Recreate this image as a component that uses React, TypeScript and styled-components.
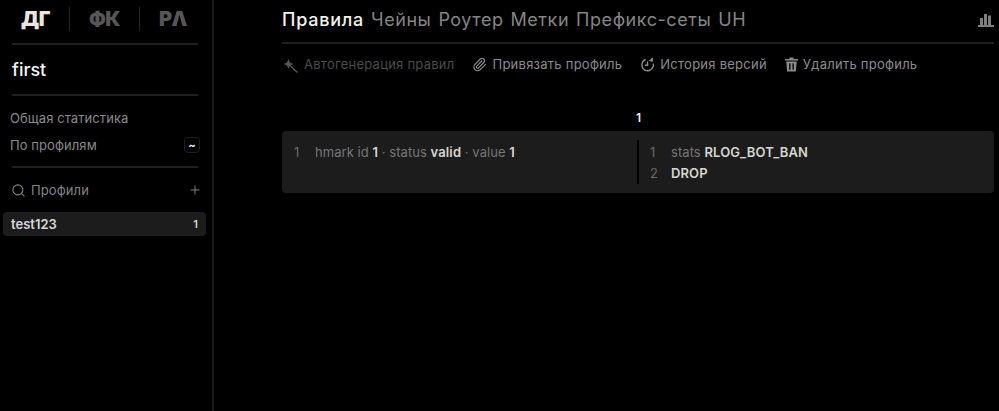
import React from "react";
import styled, { createGlobalStyle } from "styled-components";
import { Paperclip, Search, Plus } from "lucide-react";

const Global = createGlobalStyle`
    html, body {
        margin: 0;
        background: #000;
        font-family: Inter, "Noto Sans", sans-serif;
    }
`;

const Page = styled.div`
    display: flex;
    height: 411px;
    width: 999px;
    overflow: hidden;
    background: #000;
`;

const Sidebar = styled.aside`
    width: 214px;
    height: 100%;
    box-sizing: border-box;
    flex: none;
    border-right: 2px solid #1c1c1c;
    padding: 0 6px 0 0;
`;

const Brands = styled.div`
    display: grid;
    grid-template-columns: 70px 70px 66px;
    height: 31px;
    padding-top: 7px;
    margin: 0 0 5px;
`;

const Brand = styled.div<{ $active?: boolean; $divided?: boolean }>`
    display: flex;
    align-items: center;
    justify-content: ${p => (p.$active ? "flex-end" : "center")};
    height: 24px;
    font-size: 20px;
    font-weight: 900;
    letter-spacing: -0.5px;
    color: ${p => (p.$active ? "#e9e6df" : "#565656")};
    padding-right: ${p => (p.$active ? "19px" : "0")};
    border-right: ${p => (p.$active || p.$divided ? "1px solid #262626" : "none")};
    box-sizing: border-box;
`;

const Rule = styled.div`
    height: 2px;
    background: #202020;
    margin: 0 8px 0 12px;
`;

const ProfileTitle = styled.div`
    height: 49px;
    margin-left: 12px;
    display: flex;
    align-items: center;
    font-size: 18px;
    font-weight: 500;
    color: #f4f4f4;
`;

const StatLink = styled.div`
    display: flex;
    align-items: center;
    justify-content: space-between;
    height: 27px;
    margin: 0 6px 0 10px;
    font-size: 13px;
    letter-spacing: 0.08px;
    color: #8a8a8a;
`;

const StatList = styled.div`
    padding: 8px 0 8px;
`;

const Tilde = styled.span`
    width: 14px;
    height: 14px;
    border: 1px solid #1f1f1f;
    border-radius: 4px;
    display: flex;
    align-items: center;
    justify-content: center;
    font-size: 11px;
    font-weight: 700;
    color: #eee;
`;

const SearchRow = styled.div`
    display: flex;
    align-items: center;
    gap: 5px;
    height: 44px;
    margin: 0 4px 0 11px;
    font-size: 13px;
    letter-spacing: 0.1px;
    color: #858585;
`;

const Grow = styled.span`
    flex: 1;
`;

const ProfileItem = styled.div`
    display: flex;
    align-items: center;
    justify-content: space-between;
    height: 24px;
    margin-left: 3px;
    padding: 0 8px 0 8px;
    border-radius: 4px;
    background: #1c1c1c;
    font-size: 13px;
    font-weight: 600;
    color: #d8d8d8;
`;

const Count = styled.span`
    font-size: 11px;
    font-weight: 600;
`;

const Main = styled.main`
    flex: 1;
    min-width: 0;
    padding: 0 5px 0 68px;
`;

const Tabs = styled.nav`
    display: flex;
    align-items: center;
    gap: 7px;
    height: 39px;
    padding-bottom: 3px;
    font-size: 18px;
    letter-spacing: 0.55px;
`;

const Tab = styled.span<{ $active?: boolean }>`
    color: ${p => (p.$active ? "#f4f2ec" : "#858585")};
    font-weight: ${p => (p.$active ? 500 : 400)};
    letter-spacing: ${p => (p.$active ? "0.75px" : "inherit")};
`;

const ChartButton = styled.span`
    margin-left: auto;
    display: flex;
    margin-top: 3px;
`;

const Divider = styled.div`
    height: 2px;
    background: #202020;
`;

const Actions = styled.div`
    display: flex;
    align-items: center;
    height: 40px;
    gap: 18px;
`;

const Action = styled.span<{ $muted?: boolean }>`
    display: flex;
    align-items: center;
    gap: 5px;
    font-size: 13px;
    letter-spacing: 0.25px;
    color: ${p => (p.$muted ? "#4b4b4b" : "#8c8c8c")};
`;

const ColumnHead = styled.div`
    display: grid;
    grid-template-columns: 1fr 1fr;
    margin-top: 20px;
    height: 27px;
    align-items: center;
    font-size: 12px;
    font-weight: 600;
    color: #eee;
`;

const HeadCell = styled.span`
    grid-column: 2;
    margin-left: -2px;
`;

const RuleCard = styled.div`
    display: grid;
    grid-template-columns: 355px 1fr;
    height: 62px;
    box-sizing: border-box;
    padding: 9px 0;
    background: #1c1c1c;
    border-radius: 4px;
`;

const Side = styled.div<{ $bordered?: boolean }>`
    padding-left: ${p => (p.$bordered ? "11px" : "12px")};
    border-left: ${p => (p.$bordered ? "2px solid #000" : "none")};
`;

const Line = styled.div`
    display: flex;
    align-items: center;
    height: 21px;
    padding-top: 1px;
    margin-bottom: -1px;
    font-size: 13px;
    letter-spacing: 0.05px;
    color: #767676;
`;

const LineNo = styled.span`
    width: 21px;
    color: #6a6a6a;
    flex: none;
`;

const Strong = styled.b`
    color: #d8d6d0;
    font-weight: 600;
    letter-spacing: 0.12px;
`;

const Text = styled.span`
    white-space: pre;
`;

function WandIcon() {
    return (
        <svg width="17" height="17" viewBox="0 0 17 17" fill="#555">
            <path d="M6.500 3 8 6.500 11.500 8 8 9.500 6.500 13 5 9.500 1.500 8 5 6.500z" />
            <path d="M7.500 9l8 7.500" stroke="#555" strokeWidth="1.5" />
        </svg>
    );
}

function HistoryIcon() {
    return (
        <svg width="15" height="15" viewBox="0 0 15 15" fill="none" stroke="#8c8c8c" strokeWidth="1.4">
            <path d="M5.600 2.500a5.800 5.800 0 1 0 7.700 4.200" />
            <path d="M7.500 4.500v3.700H4.800" />
            <path d="M9.500 3.500 12.500 1v3.500z" fill="#8c8c8c" strokeWidth="0.8" />
        </svg>
    );
}

function TrashIcon() {
    return (
        <svg width="13" height="15" viewBox="0 0 13 15" fill="#8c8c8c">
            <path d="M4.500 0.500h4V2H13v1.500H0V2h4.500z" />
            <path d="M1.300 4.500h10.400l-.8 10H2.100zM4.200 6.300v6.500h1.300V6.300zM7.500 6.300v6.500h1.300V6.300z" fillRule="evenodd" />
        </svg>
    );
}

function ChartIcon() {
    return (
        <svg width="16" height="14" viewBox="0 0 16 14" fill="#808080">
            <rect x="2" y="4" width="3" height="8" />
            <rect x="6" y="0" width="3" height="12" />
            <rect x="10" y="1.500" width="3" height="10.500" />
            <rect x="0" y="11" width="16" height="2" />
        </svg>
    );
}

export default function App() {
    return (
        <Page>
            <Global />
            <Sidebar>
                <Brands>
                    <Brand $active>ДГ</Brand>
                    <Brand $divided>ФК</Brand>
                    <Brand>РΛ</Brand>
                </Brands>
                <Rule />
                <ProfileTitle>first</ProfileTitle>
                <Rule />
                <StatList>
                    <StatLink>Общая статистика</StatLink>
                    <StatLink>
                        По профилям
                        <Tilde>~</Tilde>
                    </StatLink>
                </StatList>
                <Rule />
                <SearchRow>
                    <Search size={15} strokeWidth={1.7} />
                    Профили
                    <Grow />
                    <Plus size={14} strokeWidth={1.6} />
                </SearchRow>
                <ProfileItem>
                    test123
                    <Count>1</Count>
                </ProfileItem>
            </Sidebar>
            <Main>
                <Tabs>
                    <Tab $active>Правила</Tab>
                    <Tab>Чейны</Tab>
                    <Tab>Роутер</Tab>
                    <Tab>Метки</Tab>
                    <Tab>Префикс-сеты</Tab>
                    <Tab>UH</Tab>
                    <ChartButton>
                        <ChartIcon />
                    </ChartButton>
                </Tabs>
                <Divider />
                <Actions>
                    <Action $muted>
                        <WandIcon />
                        Автогенерация правил
                    </Action>
                    <Action>
                        <Paperclip size={15} strokeWidth={1.8} />
                        Привязать профиль
                    </Action>
                    <Action>
                        <HistoryIcon />
                        История версий
                    </Action>
                    <Action>
                        <TrashIcon />
                        Удалить профиль
                    </Action>
                </Actions>
                <ColumnHead>
                    <HeadCell>1</HeadCell>
                </ColumnHead>
                <RuleCard>
                    <Side>
                        <Line>
                            <LineNo>1</LineNo>
                            <Text>
                                hmark id <Strong>1</Strong> · status <Strong>valid</Strong> · value <Strong>1</Strong>
                            </Text>
                        </Line>
                    </Side>
                    <Side $bordered>
                        <Line>
                            <LineNo>1</LineNo>
                            <Text>
                                stats <Strong>RLOG_BOT_BAN</Strong>
                            </Text>
                        </Line>
                        <Line>
                            <LineNo>2</LineNo>
                            <Strong>DROP</Strong>
                        </Line>
                    </Side>
                </RuleCard>
            </Main>
        </Page>
    );
}
